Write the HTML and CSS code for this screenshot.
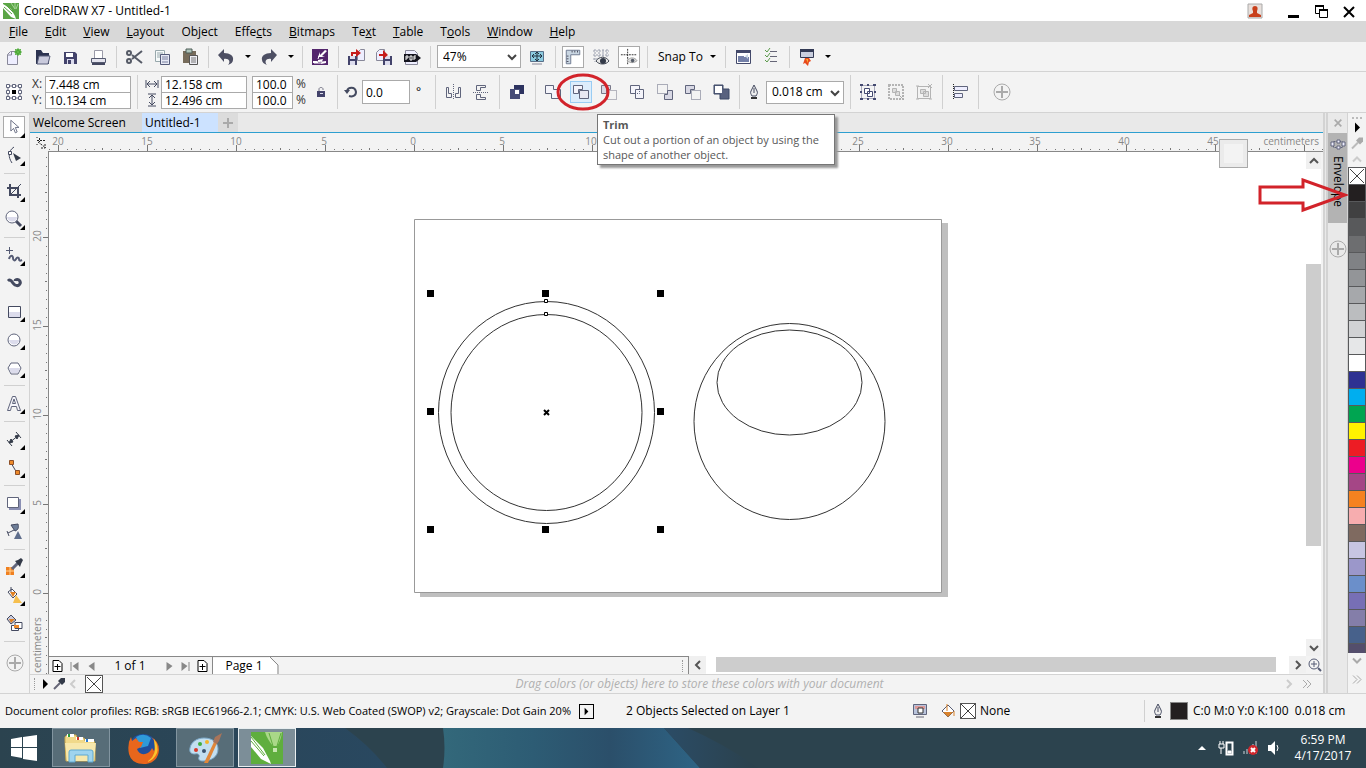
FILE: index.html
```html
<!DOCTYPE html>
<html lang="en">
<head>
  <meta charset="UTF-8">
  <meta name="viewport" content="width=device-width, initial-scale=1.0">
  <title>CorelDRAW X7 - Untitled-1</title>
  <link rel="stylesheet" href="styles.css">
</head>
<body>
  <header class="titlebar">
    <svg class="logo" viewBox="0 0 16 16"><path d="M0 0h16v16H0z" fill="#5aa545"/><path d="M0 1l8 5 4 7 1 3-5-2-8-9z" fill="#fff"/><path d="M1 4l8 7M3 2l7 7" stroke="#5aa545"/><path d="M8 0l4 6M12 0v6M15 1l-2 5" stroke="#a8d59a"/></svg>
    <h1>CorelDRAW X7 - Untitled-1</h1>
    <div class="window-buttons">
      <button class="user" aria-label="Account"><svg viewBox="0 0 16 16"><path d="M1 1h14v14H1z" fill="#e8e0dc" stroke="#aaa"/><path d="M8 3c3 0 3 3 2 5v2l4 2v2H2v-2l4-2V8C5 6 5 3 8 3z" fill="#c8401c"/></svg></button>
      <button aria-label="Minimize"><svg viewBox="0 0 16 16"><path d="M3 12h11v3H3z"/></svg></button>
      <button aria-label="Restore"><svg viewBox="0 0 16 16" fill="#fff" stroke="#000"><path d="M2.500 3.500h8v7h-8z"/><path d="M2 3h9" stroke-width="2"/><path d="M6.500 7.500h8v7h-8z"/><path d="M6 7h9" stroke-width="2"/></svg></button>
      <button aria-label="Close"><svg viewBox="0 0 16 16"><path d="M3 4l10 10M13 4L3 14" stroke="#000" stroke-width="2"/></svg></button>
    </div>
  </header>

  <nav class="menubar">
    <a href="#"><u>F</u>ile</a>
    <a href="#"><u>E</u>dit</a>
    <a href="#"><u>V</u>iew</a>
    <a href="#"><u>L</u>ayout</a>
    <a href="#">Ob<u>j</u>ect</a>
    <a href="#">Effe<u>c</u>ts</a>
    <a href="#"><u>B</u>itmaps</a>
    <a href="#">Te<u>x</u>t</a>
    <a href="#"><u>T</u>able</a>
    <a href="#">T<u>o</u>ols</a>
    <a href="#"><u>W</u>indow</a>
    <a href="#"><u>H</u>elp</a>
  </nav>

  <!-- standard toolbar -->
  <div class="toolbar">
    <button class="tool" aria-label="New"><svg viewBox="0 0 20 20"><path d="M3.500 17.500v-10l3-3h7v13z" fill="#eef" stroke="#889"/><path d="M3.500 8h4V4.500" fill="none" stroke="#889"/><circle cx="14" cy="5" r="3" fill="#3c9a28"/><path d="M14 1v8M10 5h8M11 2l6 6M17 2l-6 6" stroke="#5fb84a"/></svg></button>
    <button class="tool" aria-label="Open"><svg viewBox="0 0 20 20"><path d="M4 17V3h5l2 3h6v11z" fill="#2c3350"/><path d="M5 17l2-8h11l-2 8z" fill="#c9cadc" stroke="#565c78"/></svg></button>
    <button class="tool" aria-label="Save"><svg viewBox="0 0 20 20"><path d="M4 5h11l2 2v10H4z" fill="#43436b"/><path d="M6 6h7v4H6z" fill="#fff"/><path d="M7 12h7v5H7z" fill="#dde"/><path d="M8 13h3v4H8z" fill="#43436b"/></svg></button>
    <button class="tool" aria-label="Print"><svg viewBox="0 0 20 20"><path d="M6.500 11V3.500h8V11" fill="#fff" stroke="#9a9aa8"/><path d="M3.500 11.500h14v4h-14z" fill="#e4e4ee" stroke="#555a70"/><path d="M4 16h13v2H4z" fill="#444860"/></svg></button>
    <i class="sep"></i>
    <button class="tool" aria-label="Cut"><svg viewBox="0 0 20 20" fill="none" stroke="#555a66" stroke-width="2"><path d="M8 8l10 8M8 12l10-8"/><circle cx="5" cy="6" r="2"/><circle cx="5" cy="14" r="2"/></svg></button>
    <button class="tool" aria-label="Copy"><svg viewBox="0 0 20 20"><path d="M3.500 3.500h9v11h-9z" fill="#f6fafa" stroke="#98a8ac"/><path d="M5 6h6M5 8h6M5 10h6" stroke="#98a8ac"/><path d="M8.500 7.500h9v10h-9z" fill="#e6e9f4" stroke="#545a78"/><path d="M10 10h6M10 12h6M10 15h6" stroke="#7a80a0"/></svg></button>
    <button class="tool" aria-label="Paste"><svg viewBox="0 0 20 20"><path d="M3 4h13v12H3z" fill="#776c5b"/><path d="M6 2h6v4H6z" fill="#afc4ba" stroke="#4c5d57"/><path d="M9.500 8.500h8v9h-8z" fill="#eeeef4" stroke="#555"/><path d="M11 11h5M11 13h5M11 15h5" stroke="#777"/></svg></button>
    <i class="sep"></i>
    <button class="tool" aria-label="Undo"><svg viewBox="0 0 20 20"><path d="M2 8l6-6v4c6 0 10 3 9 7 0 2-2 4-5 5 3-3 1-7-4-6v3z" fill="#4d4f63"/></svg></button>
    <button class="drop" aria-label="Undo list"></button>
    <button class="tool" aria-label="Redo"><svg viewBox="0 0 20 20"><path d="M18 8l-6-6v4C6 6 2 9 3 13c0 2 2 4 5 5-3-3-1-7 4-6v3z" fill="#4d4f63"/></svg></button>
    <button class="drop" aria-label="Redo list"></button>
    <i class="sep"></i>
    <button class="tool" aria-label="Search content"><svg viewBox="0 0 20 20"><path d="M2 2h16v16H2z" fill="#53256c"/><path d="M15 3l-5 5V5L8 10h7l-3-1 5-5zM3 16h5v-3l5-1-2 5 5-1v-2l-7 1-2-1H3z" fill="#fff"/><path d="M4 16h8M9 9l-1 3" stroke="#fff"/></svg></button>
    <i class="sep"></i>
    <button class="tool" aria-label="Import"><svg viewBox="0 0 20 20"><path d="M11.500 13.500v-8l3-3h4v11z" fill="#eef" stroke="#889"/><path d="M2 9h9v9H2z" fill="#43436b"/><path d="M4 9h5v3H4zM4 14h5v4H4z" fill="#dde"/><path d="M5 5h5V2l5 4-5 4V7H7v2H5z" fill="#c61c1c"/></svg></button>
    <button class="tool" aria-label="Export"><svg viewBox="0 0 20 20"><path d="M2.500 13.500v-8l3-3h5v11z" fill="#eef" stroke="#889"/><path d="M9 9h9v9H9z" fill="#43436b"/><path d="M11 9h5v3h-5zM11 14h5v4h-5z" fill="#dde"/><path d="M5 7h4V3l5 5-5 4V9H5z" fill="#c61c1c"/></svg></button>
    <button class="tool" aria-label="Publish to PDF"><svg viewBox="0 0 20 20"><path d="M3.500 17.500v-14h9l3 3v11z" fill="#eef" stroke="#889"/><path d="M2 7h12l5 4-5 4H2z" fill="#15151f"/><path d="M4 13V9h2v2H4M8 9v4h2V9zM12 13V9h2M12 11h2" stroke="#fff" fill="none"/></svg></button>
    <i class="sep"></i>
    <span class="select zoom-level">
      <select aria-label="Zoom level"><option>47%</option></select>
      <svg viewBox="0 0 10 10"><path d="M1 3l4 4 4-4" fill="none" stroke="#444" stroke-width="2"/></svg>
    </span>
    <button class="tool" aria-label="Full-screen preview"><svg viewBox="0 0 20 20"><path d="M3.500 4.500h13v10h-13z" fill="#8ccbe0" stroke="#59708a"/><path d="M5 17h10" stroke="#889"/><path d="M10 5v9M5 9h10M8 7l2-2 2 2M8 12l2 2 2-2M7 7L5 9l2 2M13 7l2 2-2 2" stroke="#20303f" fill="none"/></svg></button>
    <i class="sep"></i>
    <button class="tool framed" aria-label="Show rulers"><svg viewBox="0 0 20 20"><path d="M2.500 2.500h15v5h-10v10h-5z" fill="#c9d6e2" stroke="#66738a"/><path d="M9 3v2M12 3v2M15 3v2M3 9h2M3 12h2M3 15h2" stroke="#445"/></svg></button>
    <button class="tool" aria-label="Show grid"><svg viewBox="0 0 20 20"><path d="M4 2v13M8 2v13M12 2v8M16 2v8M2 4h16M2 8h16M2 12h8" stroke="#9a9fae" stroke-dasharray="2 1"/><path d="M5 14c3-5 10-5 13 0-3 4-10 4-13 0z" fill="#e8e8e8" stroke="#444a55"/><circle cx="12" cy="14" r="3" fill="#333a48"/></svg></button>
    <button class="tool framed" aria-label="Show guidelines"><svg viewBox="0 0 20 20"><path d="M8.500 1v18M1 7.500h18" stroke="#222" stroke-dasharray="2 1"/><path d="M8 14c3-4 8-4 11 0-3 3-8 3-11 0z" fill="#ddd" stroke="#999"/><circle cx="14" cy="14" r="2" fill="#555c68"/></svg></button>
    <i class="sep"></i>
    <button class="snap">Snap To</button>
    <button class="drop" aria-label="Snap options"></button>
    <i class="sep"></i>
    <button class="tool" aria-label="Welcome screen"><svg viewBox="0 0 20 20"><path d="M3.500 3.500h14v13h-14z" fill="#fff" stroke="#43496a"/><path d="M3 3h15v3H3z" fill="#43496a"/><path d="M5 9h6v6H5zM10 10h6v5h-6z" fill="#7480a8"/><path d="M12 9l3-2v5" fill="#c9d6e2"/></svg></button>
    <button class="tool" aria-label="Options"><svg viewBox="0 0 20 20" fill="none"><path d="M9 4.500h7M9 9.500h7M9 14.500h7" stroke="#667"/><path d="M4 3l2 2 3-4M4 8l2 2 3-4M4 13l2 2 3-4" stroke="#5a9a4a"/></svg></button>
    <i class="sep"></i>
    <button class="tool" aria-label="Application launcher"><svg viewBox="0 0 20 20"><path d="M3.500 2.500h13v8h-13z" fill="#c9cede" stroke="#333a55"/><path d="M3 2h14v3H3z" fill="#333a55"/><path d="M8 11h4l2 3-2 1-1 4-3-3-2 1z" fill="#e8491c"/><path d="M9 12h2v4z" fill="#f8b030"/></svg></button>
    <button class="drop" aria-label="Launcher list"></button>
  </div>

  <!-- property bar -->
  <div class="toolbar propbar">
    <button class="tool" aria-label="Object origin"><svg viewBox="0 0 20 20" fill="#fff" stroke="#60657c"><path d="M4 4h12v12H4z"/><path d="M2.500 2.500h3v3h-3zM8.500 2.500h3v3h-3zM14.500 2.500h3v3h-3zM2.500 8.500h3v3h-3zM14.500 8.500h3v3h-3zM2.500 14.500h3v3h-3zM8.500 14.500h3v3h-3zM14.500 14.500h3v3h-3z"/><path d="M8 8h4v4H8z" fill="#000" stroke="none"/></svg></button>
    <div class="pair">
      <label for="pos-x">X:</label><input id="pos-x" value="7.448 cm">
      <label for="pos-y">Y:</label><input id="pos-y" value="10.134 cm">
    </div>
    <i class="sep"></i>
    <div class="pair size">
      <label for="width" aria-label="Width"><svg viewBox="0 0 14 14"><path d="M1 3v8M13 3v8M2 7h10M5 4L2 7l3 3M9 4l3 3-3 3" fill="none" stroke="#444a60"/></svg></label><input id="width" value="12.158 cm">
      <label for="height" aria-label="Height"><svg viewBox="0 0 14 14"><path d="M3 1h8M3 13h8M7 2v10M4 5l3-3 3 3M4 9l3 3 3-3" fill="none" stroke="#444a60"/></svg></label><input id="height" value="12.496 cm">
    </div>
    <div class="pair scale">
      <input id="scale-x" value="100.0"><label for="scale-x">%</label>
      <input id="scale-y" value="100.0"><label for="scale-y">%</label>
    </div>
    <button class="tool lock" aria-label="Lock ratio"><svg viewBox="0 0 20 20"><path d="M6 9h8v6H6z" fill="#43436b"/><path d="M8 9V7c0-2 4-2 4 0v1" fill="none" stroke="#778"/><path d="M9 11h3v1H9z" fill="#dde"/></svg></button>
    <i class="sep"></i>
    <label class="rotate" for="angle" aria-label="Angle of rotation"><svg viewBox="0 0 14 14"><path d="M3 6c1-4 8-5 9 1 0 4-4 5-7 4" fill="none" stroke="#444a60" stroke-width="2"/><path d="M0 5h6L3 9z" fill="#444a60"/></svg></label>
    <input id="angle" class="angle" value="0.0">
    <span class="degree">°</span>
    <i class="sep"></i>
    <button class="tool" aria-label="Mirror horizontally"><svg viewBox="0 0 20 20" fill="none" stroke="#60657c"><path d="M10.500 2v16" stroke-dasharray="1 1"/><path d="M3.500 5.500h2v6h3v4h-5zM17.500 5.500h-2v6h-3v4h5z"/></svg></button>
    <button class="tool" aria-label="Mirror vertically"><svg viewBox="0 0 20 20" fill="none" stroke="#60657c"><path d="M2 10.500h16" stroke-dasharray="1 1"/><path d="M5.500 3.500h9v2h-5v3h-4zM5.500 17.500h9v-2h-5v-3h-4z"/></svg></button>
    <i class="sep"></i>
    <button class="tool" aria-label="Combine"><svg viewBox="0 0 20 20"><path d="M7 3h10v9H7z" fill="#2d3360"/><path d="M3 7h10v10H3z" fill="#474d78"/><path d="M8 8h4v4H8z" fill="#fff"/></svg></button>
    <i class="sep"></i>
    <button class="tool" aria-label="Weld"><svg viewBox="0 0 20 20"><path d="M2.500 3.500h8v4h7v9h-9v-5h-6z" fill="#f4f4fa" stroke="#60657c"/></svg></button>
    <div class="trim">
      <button class="tool hot" aria-label="Trim"><svg viewBox="0 0 20 20" fill="#f4f4fa" stroke="#60657c"><path d="M2.500 3.500h9v4h-4v4h-5z"/><path d="M8.500 8.500h9v8h-9z" fill="#e8e8f2"/></svg></button>
      <svg class="mark" viewBox="0 0 54 38"><ellipse cx="27" cy="19" rx="25" ry="17" fill="none" stroke="#d2232a" stroke-width="3"/></svg>
      <div class="tooltip" role="tooltip"><strong>Trim</strong><p>Cut out a portion of an object by using the shape of another object.</p></div>
    </div>
    <button class="tool" aria-label="Intersect"><svg viewBox="0 0 20 20" fill="none" stroke="#778"><path d="M2.500 3.500h9v4h-4v4h-5z" fill="#d8d8e4"/><path d="M8.500 8.500h9v9h-9z" stroke-dasharray="1 1"/></svg></button>
    <button class="tool" aria-label="Simplify"><svg viewBox="0 0 20 20" fill="#f4f4fa" stroke="#60657c"><path d="M3.500 3.500h9v8h-9z"/><path d="M8.500 7.500h8v9h-8z"/><path d="M8 11.500h4.500V7" fill="none" stroke-dasharray="1 1"/></svg></button>
    <button class="tool" aria-label="Front minus back"><svg viewBox="0 0 20 20" stroke="#60657c"><path d="M2.500 2.500h10v9h-10z" fill="none" stroke-dasharray="1 1"/><path d="M12.500 8.500h5v9h-8v-5h3z" fill="#d8d8e4"/></svg></button>
    <button class="tool" aria-label="Back minus front"><svg viewBox="0 0 20 20" stroke="#60657c"><path d="M2.500 3.500h9v4h-4v4h-5z" fill="#d8d8e4"/><path d="M8.500 8.500h9v9h-9z" fill="none" stroke-dasharray="1 1"/></svg></button>
    <button class="tool" aria-label="Boundary"><svg viewBox="0 0 20 20"><path d="M3 3h9v4h6v10H9v-5H3z" fill="#59627f" stroke="#3d4866"/><path d="M4 4h7v7H4z" fill="#fff"/></svg></button>
    <i class="sep"></i>
    <span class="pen"><svg viewBox="0 0 14 16"><path d="M7 1L4 7c-1 2 0 3 1 5h4c1-2 2-3 1-5zM7 4v5" fill="#eee" stroke="#444a60"/><path d="M4 13h6v2H4z" fill="#333"/></svg></span>
    <span class="select outline-width">
      <select aria-label="Outline width"><option>0.018 cm</option></select>
      <svg viewBox="0 0 10 10"><path d="M1 3l4 4 4-4" fill="none" stroke="#444" stroke-width="2"/></svg>
    </span>
    <i class="sep"></i>
    <button class="tool" aria-label="Group"><svg viewBox="0 0 20 20" fill="none" stroke="#444a70"><path d="M3.500 3.500h13v13h-13z" stroke="#aab"/><path d="M6.500 6.500h5v5h-5zM9.500 9.500h5v5h-5z" fill="#fff"/><path d="M2 3h3M9 3h2M15 3h3M2 17h3M9 17h2M15 17h3M3 9v2M17 9v2" stroke-width="2"/></svg></button>
    <button class="tool" aria-label="Ungroup" disabled><svg viewBox="0 0 20 20" fill="#ddd" stroke="#b4b4b4"><path d="M3 3h14v14H3z" fill="none" stroke-width="2" stroke-dasharray="2 1"/><path d="M6.500 6.500h4v4h-4zM9.500 9.500h4v4h-4z"/><path d="M13 13l5 5M18 13l-5 5" stroke="#aaa"/></svg></button>
    <button class="tool" aria-label="Ungroup all" disabled><svg viewBox="0 0 20 20" fill="#ddd" stroke="#b4b4b4"><path d="M3.500 4.500h13v12h-13z" fill="none"/><path d="M6.500 7.500h5v4h-5zM9.500 9.500h5v5h-5z"/><path d="M2 4h3M2 17h3M15 17h3M14 2l4 4M18 2l-4 4"/></svg></button>
    <i class="sep"></i>
    <button class="tool" aria-label="Align and distribute"><svg viewBox="0 0 20 20" stroke="#60657c"><path d="M3.500 2v16" stroke="#222" stroke-dasharray="1 1"/><path d="M4.500 4.500h13v4h-13zM4.500 11.500h8v4h-8z" fill="#eef"/></svg></button>
    <i class="sep"></i>
    <button class="add" aria-label="Quick customize"><svg viewBox="0 0 20 20"><circle cx="10" cy="10" r="8" fill="none" stroke="#aaa"/><path d="M10 4v12M4 10h12" stroke="#aaa" stroke-width="2"/></svg></button>
  </div>

  <main>
    <aside class="toolbox">
      <button class="tool framed more" aria-label="Pick"><svg viewBox="0 0 20 20"><path d="M6.500 2.500v12l3-3 2 5 2-1-2-5h4z" fill="#fff" stroke="#60657c"/></svg></button>
      <button class="tool more" aria-label="Shape"><svg viewBox="0 0 20 20"><path d="M10 2C4 6 4 12 8 18" fill="none" stroke="#444a60"/><path d="M4.500 6.500h3v3h-3z" fill="#fff" stroke="#444a60"/><path d="M9 8l8 5-5 3z" fill="#333a48"/></svg></button>
      <i class="rule"></i>
      <button class="tool more" aria-label="Crop"><svg viewBox="0 0 20 20" fill="none" stroke="#444a60" stroke-width="2"><path d="M6 3v11h11M3 7h11v10"/><path d="M6 14L17 3" stroke-width="1"/></svg></button>
      <button class="tool more" aria-label="Zoom"><svg viewBox="0 0 20 20"><path d="M12 12l5 5" stroke="#444a60" stroke-width="3"/><circle cx="8" cy="8" r="6" fill="#fff" stroke="#60657c"/><path d="M3 8h10c0 6-9 6-10 0z" fill="#dcdcec"/></svg></button>
      <i class="rule"></i>
      <button class="tool more" aria-label="Freehand"><svg viewBox="0 0 20 20" fill="none" stroke="#555b74"><path d="M5.500 2v7M2 5.500h7"/><path d="M5 14c1-4 4-4 4-1s2 3 3 1 3-2 3 0 1 2 3 1" stroke-width="2"/></svg></button>
      <button class="tool" aria-label="Artistic media"><svg viewBox="0 0 20 20" fill="none" stroke="#444a60"><path d="M4 8c3-3 4 2 7 4 4 2 7-2 4-5-2-1-4 0-4 1" stroke-width="3"/></svg></button>
      <button class="tool more" aria-label="Rectangle"><svg viewBox="0 0 20 20"><path d="M4.500 5.500h12v11h-12z" fill="#fff" stroke="#444a60"/><path d="M5 11h11v5H5z" fill="#dcdcec"/></svg></button>
      <button class="tool more" aria-label="Ellipse"><svg viewBox="0 0 20 20"><circle cx="10" cy="11" r="6" fill="#fff" stroke="#60657c"/><path d="M5 11h10c0 6-9 6-10 0z" fill="#dcdcec"/></svg></button>
      <button class="tool more" aria-label="Polygon"><svg viewBox="0 0 20 20"><path d="M7 6h7l3 5-3 6H7l-3-6z" fill="#fff" stroke="#60657c"/><path d="M5 11h11l-2 5H7z" fill="#dcdcec"/></svg></button>
      <i class="rule"></i>
      <button class="tool more" aria-label="Text"><svg viewBox="0 0 20 20"><path d="M3.500 17.500l5-14h3l5 14h-3l-1-4h-5l-1 4zM8.500 10.500h3L10 6z" fill="#f4f4fa" stroke="#60657c"/></svg></button>
      <i class="rule"></i>
      <button class="tool more" aria-label="Dimension"><svg viewBox="0 0 20 20" stroke="#333a48"><path d="M5 14L15 6M3 11l5 6M12 3l5 6"/><path d="M5 14l2-4 2 3zM15 6l-2 4-2-3z" fill="#333a48"/></svg></button>
      <button class="tool more" aria-label="Connector"><svg viewBox="0 0 20 20"><path d="M7 6l6 10" stroke="#444a60"/><path d="M5.500 3.500h4v4h-4zM11.500 13.500h4v4h-4z" fill="#ee8a2a" stroke="#8c4f28"/></svg></button>
      <i class="rule"></i>
      <button class="tool more" aria-label="Drop shadow"><svg viewBox="0 0 20 20"><path d="M5 6h12v11H5z" fill="#8b90b4"/><path d="M3.500 4.500h11v10h-11z" fill="#fff" stroke="#60657c"/></svg></button>
      <button class="tool" aria-label="Transparency"><svg viewBox="0 0 20 20"><path d="M7 4l7-1c1 4 0 6-3 7z" fill="#6e7e98" stroke="#444a60"/><path d="M10 9l-6 3M3 10l2 5" stroke="#444a60"/><path d="M14 10l4 8h-8z" fill="#5f6e8c"/></svg></button>
      <i class="rule"></i>
      <button class="tool more" aria-label="Color eyedropper"><svg viewBox="0 0 20 20"><path d="M2 10h8v8H2z" fill="#f08020"/><path d="M6 10v8M2 14h8" stroke="#ffd090"/><path d="M8 12l6-6" stroke="#60657c" stroke-width="3"/><path d="M11 4l3-1 3-2 2 2-2 4-1 3z" fill="#333a48"/></svg></button>
      <button class="tool more" aria-label="Interactive fill"><svg viewBox="0 0 20 20"><path d="M4 7l4-3 5 5-4 4z" fill="#fff" stroke="#444a60"/><path d="M6 7h6l-3 5z" fill="#e08020"/><path d="M7 2v5" stroke="#444a60"/><path d="M12 10l6 8H9z" fill="#f6bf4e"/></svg></button>
      <button class="tool" aria-label="Smart fill"><svg viewBox="0 0 20 20"><path d="M3 6l4-4 5 5-5 4z" fill="#c9cadc" stroke="#444a60"/><path d="M5 6h6l-4 4z" fill="#e08020"/><path d="M11 9.500h7v6h-7zM7.500 12.500h7v5h-7z" fill="#fff" stroke="#444a60"/><path d="M10 12h5v3h-5z" fill="#ee8a2a"/></svg></button>
      <i class="rule"></i>
      <button class="add" aria-label="Quick customize"><svg viewBox="0 0 20 20"><circle cx="10" cy="10" r="8" fill="none" stroke="#aaa"/><path d="M10 4v12M4 10h12" stroke="#aaa" stroke-width="2"/></svg></button>
    </aside>

    <section class="document">
      <div class="tabs">
        <button class="tab">Welcome Screen</button>
        <button class="tab active">Untitled-1</button>
        <button class="tab-add" aria-label="New tab"><svg viewBox="0 0 12 12"><path d="M6 1v10M1 6h10" stroke="#aaa" stroke-width="2"/></svg></button>
      </div>

      <div class="ruler-row">
        <svg class="ruler-corner" viewBox="0 0 18 18"><path d="M9.500 5v4M7 7.500h9M8 9l8 6M15 11v4h-4M7 4v1M7 11v1" fill="none" stroke="#222" stroke-dasharray="2 1"/></svg>
        <svg class="ruler-top">
          <defs>
            <pattern id="ticks-x" x="10" width="89" height="18" patternUnits="userSpaceOnUse">
              <path d="M0 12h1v6H0zM9 16h1v1H9zM18 16h1v1h-1zM27 16h1v1h-1zM36 16h1v1h-1zM44 15h1v2h-1zM53 16h1v1h-1zM62 16h1v1h-1zM71 16h1v1h-1zM80 16h1v1h-1z" fill="#777"/>
            </pattern>
          </defs>
          <rect width="100%" height="18" fill="url(#ticks-x)"/>
          <g text-anchor="middle">
            <text x="10" y="12">20</text><text x="99" y="12">15</text><text x="188" y="12">10</text><text x="276" y="12">5</text><text x="365" y="12">0</text><text x="454" y="12">5</text><text x="543" y="12">10</text><text x="810" y="12">25</text><text x="899" y="12">30</text><text x="987" y="12">35</text><text x="1076" y="12">40</text><text x="1165" y="12">45</text>
          </g>
          <text x="100%" dx="-4" y="12" text-anchor="end">centimeters</text>
        </svg>
      </div>

      <div class="work">
        <svg class="ruler-left">
          <defs>
            <pattern id="ticks-y" y="85" width="18" height="89" patternUnits="userSpaceOnUse">
              <path d="M13 0h5v1h-5zM16 9h1v1h-1zM16 18h1v1h-1zM16 27h1v1h-1zM16 36h1v1h-1zM15 44h2v1h-2zM16 53h1v1h-1zM16 62h1v1h-1zM16 71h1v1h-1zM16 80h1v1h-1z" fill="#777"/>
            </pattern>
          </defs>
          <rect width="18" height="100%" fill="url(#ticks-y)"/>
          <g text-anchor="middle">
            <text transform="translate(11 84) rotate(-90)">20</text>
            <text transform="translate(11 173) rotate(-90)">15</text>
            <text transform="translate(11 262) rotate(-90)">10</text>
            <text transform="translate(11 351) rotate(-90)">5</text>
            <text transform="translate(11 440) rotate(-90)">0</text>
            <text transform="translate(11 493) rotate(-90)">centimeters</text>
          </g>
        </svg>
        <div class="stage">
          <div class="view">
            <svg class="canvas">
              <g transform="translate(365 67)">
                <path d="M6 4h528v374H6z" fill="#bfbfbf"/>
                <path d="M.5.5h527v373H.5z" fill="#fff" stroke="#999"/>
                <g fill="none" stroke="#333">
                  <ellipse cx="132.500" cy="193.500" rx="108" ry="111"/>
                  <ellipse cx="132.500" cy="193.500" rx="95.500" ry="98"/>
                  <ellipse cx="375.500" cy="202.500" rx="95.500" ry="98"/>
                  <ellipse cx="375.500" cy="163.500" rx="72.500" ry="52.500"/>
                </g>
                <path d="M13 71h7v7h-7zM128 71h7v7h-7zM243 71h7v7h-7zM13 189h7v7h-7zM243 189h7v7h-7zM13 307h7v7h-7zM128 307h7v7h-7zM243 307h7v7h-7z"/>
                <path d="M130.500 80.500h3v3h-3zM130.500 93.500h3v3h-3z" fill="#fff" stroke="#000"/>
                <path d="M130 191l5 5M135 191l-5 5" stroke="#000" stroke-width="2"/>
              </g>
            </svg>
            <div class="scroll-y">
              <button aria-label="Scroll up"><svg viewBox="0 0 10 10"><path d="M1 7l4-4 4 4" fill="none" stroke="#555" stroke-width="2"/></svg></button>
              <div class="track"><span class="thumb"></span></div>
              <button aria-label="Scroll down"><svg viewBox="0 0 10 10"><path d="M1 3l4 4 4-4" fill="none" stroke="#555" stroke-width="2"/></svg></button>
            </div>
          </div>
          <div class="bottom">
            <div class="pages">
              <button aria-label="Add page before"><svg viewBox="0 0 14 14"><path d="M2.500 1.500h6l3 3v8h-9zM4 7.500h6M7 5v6" fill="#fff" stroke="#000"/></svg></button>
              <button aria-label="First page"><svg viewBox="0 0 14 14" fill="#888"><path d="M3 3h1v9H3zM11 3v9L5 7z"/></svg></button>
              <button aria-label="Previous page"><svg viewBox="0 0 14 14" fill="#888"><path d="M10 3v9L4 7z"/></svg></button>
              <span class="page-count">1 of 1</span>
              <button aria-label="Next page"><svg viewBox="0 0 14 14" fill="#888"><path d="M5 3v9l6-5z"/></svg></button>
              <button aria-label="Last page"><svg viewBox="0 0 14 14" fill="#888"><path d="M3 3v9l6-5zM10 3h1v9h-1z"/></svg></button>
              <button aria-label="Add page after"><svg viewBox="0 0 14 14"><path d="M2.500 1.500h6l3 3v8h-9zM4 7.500h6M7 5v6" fill="#fff" stroke="#000"/></svg></button>
              <button class="page-tab"><span>Page 1</span><svg viewBox="0 0 10 17"><path d="M0 0l8 8v9H0z" fill="#fff"/><path d="M1 0l8 8v9" fill="none" stroke="#888"/></svg></button>
              <i class="grip"></i>
            </div>
            <div class="scroll-x">
              <button aria-label="Scroll left"><svg viewBox="0 0 10 10"><path d="M7 1L3 5l4 4" fill="none" stroke="#555" stroke-width="2"/></svg></button>
              <div class="track"><span class="thumb"></span></div>
              <button aria-label="Scroll right"><svg viewBox="0 0 10 10"><path d="M3 1l4 4-4 4" fill="none" stroke="#555" stroke-width="2"/></svg></button>
            </div>
            <button class="navigator" aria-label="Navigator"><svg viewBox="0 0 14 14" fill="none" stroke="#555b74"><circle cx="6" cy="6" r="5"/><path d="M6 3v6M3 6h6"/><path d="M10 10l3 3" stroke-width="2"/></svg></button>
          </div>
        </div>
      </div>

      <div class="doc-palette">
        <i class="grip"></i>
        <button aria-label="Palette menu"><svg viewBox="0 0 12 14"><path d="M4 2v10l5-5z"/></svg></button>
        <button aria-label="Eyedropper"><svg viewBox="0 0 14 14"><path d="M2 12l6-6" stroke="#667" stroke-width="2"/><path d="M6 4l4 4 3-3V1H9z" fill="#333a48"/></svg></button>
        <button aria-label="Back"><svg viewBox="0 0 12 14"><path d="M8 3L4 7l4 4" fill="none" stroke="#ccc" stroke-width="2"/></svg></button>
        <button class="no-color" aria-label="No color"><svg viewBox="0 0 16 16"><path d="M1 1l14 14M15 1L1 15" stroke="#444"/></svg></button>
        <em>Drag colors (or objects) here to store these colors with your document</em>
        <button class="next" aria-label="Forward"><svg viewBox="0 0 12 14"><path d="M4 3l4 4-4 4" fill="none" stroke="#ccc" stroke-width="2"/></svg></button>
        <button aria-label="Expand"><svg viewBox="0 0 12 14"><path d="M2 3l4 4-4 4M6 3l4 4-4 4" fill="none" stroke="#aaa"/></svg></button>
      </div>
      <span class="drop-zone"></span>
    </section>

    <aside class="docker">
      <button class="docker-close" aria-label="Close docker"><svg viewBox="0 0 12 12"><path d="M2 2l8 8M10 2l-8 8" stroke="#aaa" stroke-width="2"/></svg></button>
      <button class="docker-tab">
        <svg viewBox="0 0 16 14"><path d="M3.500 4.500h9v6h-9z" fill="none" stroke="#60657c" stroke-dasharray="2 1"/><path d="M1 5h3v4H1zM7 3h3v3H7zM12 5h3v4h-3zM7 9h3v3H7z" fill="#eef" stroke="#60657c"/></svg>
        <span>Envelope</span>
      </button>
      <button class="add" aria-label="Quick customize"><svg viewBox="0 0 20 20"><circle cx="10" cy="10" r="8" fill="none" stroke="#aaa"/><path d="M10 4v12M4 10h12" stroke="#aaa" stroke-width="2"/></svg></button>
    </aside>

    <aside class="palette">
      <div class="palette-head">
        <i class="grip wide"></i>
        <button aria-label="Palette menu"><svg viewBox="0 0 14 14"><path d="M5 2v10l5-5z"/></svg></button>
        <button aria-label="Eyedropper"><svg viewBox="0 0 14 14"><path d="M2 12l6-6" stroke="#bbb" stroke-width="2"/><path d="M6 4l4 4 3-3V1H9z" fill="#aaa"/></svg></button>
        <button aria-label="Scroll up"><svg viewBox="0 0 14 14"><path d="M3 9l4-4 4 4" fill="none" stroke="#ccc" stroke-width="2"/></svg></button>
      </div>
      <div class="swatches">
        <button class="none" aria-label="No color"><svg viewBox="0 0 16 16"><path d="M1 1l14 14M15 1L1 15" stroke="#444"/></svg></button>
        <button style="background:#231f20" aria-label="Black"></button>
        <button style="background:#404041" aria-label="90% black"></button>
        <button style="background:#58595b" aria-label="80% black"></button>
        <button style="background:#6d6e70" aria-label="70% black"></button>
        <button style="background:#808285" aria-label="60% black"></button>
        <button style="background:#939598" aria-label="50% black"></button>
        <button style="background:#a6a8ab" aria-label="40% black"></button>
        <button style="background:#bbbdbf" aria-label="30% black"></button>
        <button style="background:#d1d2d4" aria-label="20% black"></button>
        <button style="background:#e6e7e8" aria-label="10% black"></button>
        <button style="background:#ffffff" aria-label="White"></button>
        <button style="background:#2e3192" aria-label="Blue"></button>
        <button style="background:#00aeef" aria-label="Cyan"></button>
        <button style="background:#00a551" aria-label="Green"></button>
        <button style="background:#fff200" aria-label="Yellow"></button>
        <button style="background:#ed1c24" aria-label="Red"></button>
        <button style="background:#ec008c" aria-label="Magenta"></button>
        <button style="background:#a54686" aria-label="Purple"></button>
        <button style="background:#f58220" aria-label="Orange"></button>
        <button style="background:#f7adaf" aria-label="Pink"></button>
        <button style="background:#7f6a60" aria-label="Brown"></button>
        <button style="background:#c7c5e2" aria-label="Powder blue"></button>
        <button style="background:#9b97ca" aria-label="Pastel blue"></button>
        <button style="background:#6b8fca" aria-label="Baby blue"></button>
        <button style="background:#776fb5" aria-label="Electric blue"></button>
        <button style="background:#847ea9" aria-label="Twilight blue"></button>
        <button style="background:#47618b" aria-label="Navy blue"></button>
        <button style="background:#544e6c" aria-label="Deep navy"></button>
      </div>
      <div class="palette-foot">
        <button aria-label="Scroll down"><svg viewBox="0 0 14 14"><path d="M3 5l4 4 4-4" fill="none" stroke="#aaa" stroke-width="2"/></svg></button>
        <button aria-label="Expand"><svg viewBox="0 0 14 14"><path d="M3 3l4 4-4 4M7 3l4 4-4 4" fill="none" stroke="#aaa"/></svg></button>
      </div>
    </aside>

    <svg class="arrow" viewBox="0 0 90 36"><path d="M2 9h43V2l42 15-42 15v-7H2z" fill="none" stroke="#d2232a" stroke-width="3"/></svg>
  </main>

  <footer class="status">
    <div class="profiles">
      <span>Document color profiles: RGB: sRGB IEC61966-2.1; CMYK: U.S. Web Coated (SWOP) v2; Grayscale: Dot Gain 20%</span>
      <button aria-label="More"><svg viewBox="0 0 14 14"><path d="M5 3v8l4-4z"/></svg></button>
    </div>
    <span>2 Objects Selected on Layer 1</span>
    <div class="fill">
      <svg viewBox="0 0 16 16"><path d="M1.500 1.500h13v10h-13z" fill="#b9c4dc" stroke="#60657c"/><path d="M3 3h10v3H3z" fill="#d99"/><path d="M6 5h5v5H6z" fill="#fff" stroke="#333"/><path d="M4 14h8" stroke="#667"/></svg>
      <svg viewBox="0 0 16 16"><path d="M2 8l6-6 6 6-6 6z" fill="#fff" stroke="#555b74"/><path d="M3 9h10l-5 5z" fill="#d9822b"/><path d="M7 1v7M14 8v5" stroke="#d9822b"/></svg>
      <span class="no-color"><svg viewBox="0 0 16 16"><path d="M0 0l16 16M16 0L0 16" stroke="#222"/></svg></span>
      <span>None</span>
    </div>
    <div class="outline">
      <svg viewBox="0 0 14 16"><path d="M7 1L4 7c-1 2 0 3 1 5h4c1-2 2-3 1-5zM7 4v5" fill="#eee" stroke="#444a60"/><path d="M4 13h6v2H4z" fill="#333"/></svg>
      <i class="black"></i>
      <span>C:0 M:0 Y:0 K:100&nbsp; 0.018 cm</span>
    </div>
  </footer>

  <div class="taskbar">
    <svg class="wallpaper" viewBox="0 0 1366 40" preserveAspectRatio="none">
      <defs>
        <linearGradient id="wave"><stop offset="0" stop-color="#33687a"/><stop offset=".35" stop-color="#2d5c74"/><stop offset=".65" stop-color="#2b4f6a"/><stop offset="1" stop-color="#2e6485"/></linearGradient>
        <linearGradient id="tail"><stop offset="0" stop-color="#2b4c66"/><stop offset="1" stop-color="#2b414c"/></linearGradient>
        <linearGradient id="left"><stop offset="0" stop-color="#2b434f"/><stop offset="1" stop-color="#294860"/></linearGradient>
      </defs>
      <path d="M0 0h1366v40H0z" fill="#2c434e"/>
      <path d="M0 0h345q25 18 42 40H0z" fill="url(#left)"/>
      <path d="M443 0h221l36 40H443q3-20 0-40z" fill="url(#wave)"/>
      <path d="M664 0h24q40 18 70 40h-58z" fill="url(#tail)"/>
    </svg>
    <button class="start" aria-label="Start"><svg viewBox="0 0 26 26" fill="#fff"><path d="M0 4l11-2v10H0zM12 2l14-2v12H12zM0 13h11v10L0 21zM12 13h14v13l-14-2z"/></svg></button>
    <button class="app open" aria-label="File Explorer"><svg viewBox="0 0 36 34"><path d="M2 10V6l2-2h9l1 3h7l1 3h9l1 3v17H3z" fill="#f0d98a" stroke="#c9a850"/><path d="M4 3h7v3H4zM13 6h7v3h-7zM22 8h9v3h-9z" fill="#fff"/><path d="M5 3h2v3H5z" fill="#2a9a3a"/><path d="M14 6h2v3h-2z" fill="#d03a2a"/><path d="M23 8h2v3h-2z" fill="#2a7ad0"/><path d="M2 12h31l-2 18H4z" fill="#f7e8ac"/><path d="M6 31V21q0-2 2-2h20q2 0 2 2v10h-5v-7H12v7z" fill="#9fd4ee" stroke="#5fa8d0"/></svg></button>
    <button class="app" aria-label="Firefox"><svg viewBox="0 0 36 34"><circle cx="18" cy="17" r="14" fill="#1f4f9c"/><path d="M11 6q8-5 15 1l-3 8-8 2z" fill="#2f9ad8"/><path d="M6 6l1 4 4-3 3 4h4l-2 5-4 2q2 6 8 5 5-1 7-6l2 3q3-9-3-14 8 4 8 13-1 12-13 14Q7 34 4 23 2 13 6 6z" fill="#e8661c"/><path d="M29 8q5 7 3 14-3 7-10 9 7-5 8-12z" fill="#fbc42c"/></svg></button>
    <button class="app open" aria-label="Paint"><svg viewBox="0 0 36 34"><path d="M17 7c9 0 14 5 14 11 0 8-7 12-15 12-4 0-5-2-4-4s-1-4-4-3c-4 0-6-2-5-6 1-6 7-10 14-10z" fill="#c3dff0" stroke="#7ba8c8"/><circle cx="9" cy="19" r="2" fill="#d83a2a"/><circle cx="13" cy="13" r="2" fill="#3fae3f"/><circle cx="20" cy="11" r="2" fill="#f3b52a"/><circle cx="17" cy="20" r="2" fill="#3b5470"/><path d="M17 32l10-21 3 1-9 20z" fill="#e0873a"/><path d="M26 11l2-5 7-4-3 8-2 3z" fill="#a8745a"/></svg></button>
    <button class="app open current" aria-label="CorelDRAW"><svg viewBox="0 0 36 34"><path d="M2 1h32v32H2z" fill="#5fae3e"/><path d="M2 5l12 12 7 13 1 3-10-5L2 16z" fill="#fff"/><path d="M2 10l13 15M2 6l14 18" stroke="#5fae3e"/><path d="M16 1h17q-1 8-5 14h-4Q18 8 16 1z" fill="#a9d888"/><path d="M20 2l4 13M28 15l4-13" stroke="#5fae3e"/><path d="M24 17h4v4h-4z" fill="#c6e6b0"/></svg></button>
    <div class="tray">
      <svg viewBox="0 0 16 16" fill="#fff"><path d="M4 10l4-4 4 4z"/></svg>
      <svg viewBox="0 0 16 16" fill="none" stroke="#fff"><path d="M1 4h5v4H1zM2 1v3M5 1v3M3 8v6"/><path d="M8.500 2.500h6v12h-6z" stroke-width="2"/><path d="M10 11h3v2h-3z" fill="#fff"/></svg>
      <svg viewBox="0 0 16 16"><path d="M1 11h2v3H1zM4 9h2v5H4zM7 7h2v7H7zM10 4h2v10h-2zM13 1h2v13h-2z" fill="#7d8c94"/><circle cx="11" cy="10" r="5" fill="#d0262c"/><path d="M9 8l4 4M13 8l-4 4" stroke="#fff" stroke-width="2"/></svg>
      <svg viewBox="0 0 16 16"><path d="M2 5h3l4-4v14l-4-4H2z" fill="#fff"/><path d="M11 5q2 3 0 6" fill="none" stroke="#fff"/></svg>
      <div class="clock"><span>6:59 PM</span><span>4/17/2017</span></div>
    </div>
  </div>
</body>
</html>
```
FILE: styles.css
```css
* {
  margin: 0;
  padding: 0;
  box-sizing: border-box;
}

body {
  font-family: "Open Sans", "Noto Sans", sans-serif;
  font-size: 12px;
  line-height: 16px;
  color: #000;
  background-color: #f3f3f3;
  display: flex;
  flex-direction: column;
  height: 100vh;
  overflow: hidden;
}

button, input, select {
  font: inherit;
  color: inherit;
  border: none;
  background: none;
  border-radius: 0;
}

button {
  display: flex;
  align-items: center;
  justify-content: center;
  flex: none;
}

svg {
  display: block;
  flex: none;
}

a {
  color: inherit;
  text-decoration: none;
}

/* title and menu */
.titlebar {
  display: flex;
  align-items: center;
  gap: 5px;
  height: 21px;
  padding: 0 9px 0 3px;
  background-color: #fff;
}

.titlebar h1 {
  font-size: 12px;
  font-weight: normal;
}

.logo {
  width: 16px;
  height: 16px;
}

.window-buttons {
  display: flex;
  gap: 12px;
  margin-left: auto;
}

.window-buttons svg {
  width: 16px;
  height: 16px;
}

.window-buttons .user {
  margin-right: 10px;
}

.menubar {
  display: flex;
  align-items: center;
  gap: 17px;
  height: 21px;
  padding-left: 9px;
  background-color: #d8d8d8;
}

/* toolbars */
.toolbar {
  display: flex;
  align-items: center;
  height: 30px;
  border-bottom: 1px solid #d3d3d3;
}

.propbar {
  height: 41px;
}

.tool {
  width: 28px;
  height: 28px;
}

.tool svg,
.add svg {
  width: 20px;
  height: 20px;
}

.framed svg {
  width: 22px;
  height: 22px;
  padding: 1px;
  border: 1px solid #aaa;
  background-color: #fff;
}

.hot svg {
  width: 22px;
  height: 22px;
  border: 1px solid #99ccf3;
  background-color: #ddedfb;
}

.sep {
  width: 1px;
  height: 22px;
  margin: 0 3px 0 4px;
  background-color: #d0d0d0;
}

.propbar .sep {
  height: 34px;
}

.drop {
  width: 15px;
  height: 22px;
}

.drop::before {
  content: "";
  border: 3px solid transparent;
  border-top: 3px solid #000;
  border-bottom: none;
}

.snap {
  padding: 0 3px 0 7px;
}

.select {
  position: relative;
  display: flex;
  background-color: #fff;
  border: 1px solid #aaa;
}

.select select {
  appearance: none;
  width: 100%;
  height: 21px;
  padding-left: 5px;
}

.select svg {
  position: absolute;
  right: 3px;
  top: 6px;
  width: 10px;
  height: 10px;
  pointer-events: none;
}

.zoom-level {
  width: 84px;
  margin: 0 2px 0 3px;
}

.outline-width {
  width: 78px;
  margin-right: 2px;
}

.pair {
  display: grid;
  grid-template-columns: 12px 86px;
  grid-auto-rows: 16px;
  align-items: center;
  gap: 0 1px;
  margin: 0 2px 0 4px;
}

.pair label {
  color: #333;
}

.pair svg {
  width: 14px;
  height: 14px;
}

.pair input,
.angle {
  width: 100%;
  height: 17px;
  padding: 0 3px;
  background-color: #fff;
  border: 1px solid #aaa;
}

.size {
  grid-template-columns: 15px 86px;
  margin: 0 5px 0 4px;
}

.scale {
  grid-template-columns: 41px 12px;
  gap: 0 3px;
  margin: 0;
}

.lock {
  width: 25px;
}

.propbar .angle {
  width: 48px;
  height: 24px;
}

.rotate {
  padding: 0 4px 0 3px;
}

.rotate svg {
  width: 14px;
  height: 14px;
}

.degree {
  width: 21px;
  padding-right: 4px;
  text-align: center;
}

.pen {
  padding: 0 5px 0 4px;
}

.pen svg,
.outline svg {
  width: 14px;
  height: 16px;
}

.propbar .add {
  margin-left: 10px;
}

/* trim button with its mark and tooltip */
.trim {
  position: relative;
}

.mark {
  position: absolute;
  left: -11px;
  top: -5px;
  z-index: 3;
  width: 54px;
  height: 38px;
}

.tooltip {
  position: absolute;
  left: 30px;
  top: 36px;
  z-index: 2;
  width: 238px;
  padding: 2px 5px;
  font-size: 11px;
  color: #575757;
  background-color: #fff;
  border: 1px solid #767676;
  box-shadow: 3px 3px 2px #999;
}

.tooltip p,
.tooltip strong {
  display: block;
  line-height: 15px;
}

/* main area */
main {
  position: relative;
  display: flex;
  flex: 1;
  min-height: 0;
  border-bottom: 1px solid #d3d3d3;
}

.toolbox {
  width: 30px;
  border-right: 1px solid #d3d3d3;
}

.toolbox .tool {
  position: relative;
}

.more::after {
  content: "";
  position: absolute;
  right: 3px;
  bottom: 3px;
  border-left: 5px solid transparent;
  border-bottom: 5px solid #000;
}

.rule {
  display: block;
  height: 1px;
  margin: 4px 4px 3px;
  background-color: #d0d0d0;
}

.toolbox .add {
  margin: 11px 5px 0;
}

.document {
  position: relative;
  display: flex;
  flex-direction: column;
  flex: 1;
  min-width: 0;
}

.tabs {
  display: flex;
  height: 20px;
  background-color: #e9e9e9;
  border-bottom: 1px solid #2d9fd0;
}

.tab {
  justify-content: flex-start;
  width: 112px;
  padding: 0 4px 0 3px;
  background-color: #d8d8d8;
}

.tab.active {
  width: 76px;
  background-color: #cce2ff;
}

.tab-add {
  width: 20px;
  background-color: #dcdcdc;
}

.tab-add svg {
  width: 12px;
  height: 12px;
}

.ruler-row {
  display: flex;
  height: 19px;
}

.ruler-corner {
  width: 18px;
  height: 18px;
}

.ruler-top {
  flex: 1;
  height: 19px;
  min-width: 0;
  border-bottom: 1px solid #888;
}

.ruler-top text,
.ruler-left text {
  font-size: 10px;
  fill: #888;
}

.work {
  display: flex;
  flex: 1;
  min-height: 0;
}

.ruler-left {
  width: 18px;
  height: 100%;
}

.stage {
  display: flex;
  flex-direction: column;
  flex: 1;
  min-width: 0;
  border-left: 1px solid #888;
}

.view {
  display: flex;
  flex: 1;
  min-height: 0;
  background-color: #fff;
}

.canvas {
  flex: 1;
  height: 100%;
  min-width: 0;
}

.scroll-y {
  display: flex;
  flex-direction: column;
  width: 17px;
  border-right: 2px solid #f3f3f3;
}

.scroll-y button,
.scroll-x button {
  width: 17px;
  height: 17px;
  background-color: #f0f0f0;
}

.scroll-y button svg,
.scroll-x button svg {
  width: 10px;
  height: 10px;
}

.scroll-y button {
  width: 15px;
}

.track {
  flex: 1;
  background-color: #fff;
}

.thumb {
  display: block;
  background-color: #cdcdcd;
}

.scroll-y .thumb {
  height: 60%;
  margin-top: 95px;
}

.bottom {
  display: flex;
  height: 18px;
}

.pages {
  display: flex;
  flex: 0 0 640px;
  align-items: center;
  border-top: 1px solid #888;
  border-right: 1px solid #888;
}

.pages button svg {
  width: 17px;
  height: 14px;
}

.page-count {
  width: 60px;
  text-align: center;
}

.pages .page-tab {
  justify-content: space-between;
  width: 67px;
  height: 17px;
  margin-left: 1px;
  border-left: 1px solid #888;
}

.page-tab span {
  flex: 1;
  padding-left: 6px;
  background-color: #fff;
}

.pages .page-tab svg {
  width: 10px;
  height: 17px;
}

.grip {
  width: 1px;
  height: 12px;
  border-left: 1px dotted #999;
}

.grip.wide {
  width: 10px;
  height: 1px;
  margin: 4px 0 0;
  border-left: none;
  border-top: 2px dotted #bbb;
}

.pages .grip {
  margin: 0 5px 0 auto;
}

.scroll-x {
  display: flex;
  flex: 1;
}

.scroll-x .thumb {
  width: 96%;
  height: 15px;
  margin-top: 1px;
  margin-left: 10px;
}

.navigator {
  width: 17px;
  height: 18px;
}

.navigator svg {
  width: 14px;
  height: 14px;
}

.doc-palette {
  display: flex;
  align-items: center;
  height: 19px;
  border-top: 1px solid #d3d3d3;
}

.doc-palette .grip {
  margin: 0 3px 0 4px;
}

.doc-palette button svg {
  width: 14px;
  height: 14px;
}

.doc-palette .no-color {
  margin-left: 5px;
}

.no-color svg,
.doc-palette .no-color svg {
  width: 18px;
  height: 18px;
  border: 1px solid #555;
  background-color: #fff;
}

.doc-palette em {
  flex: 1;
  padding-left: 14px;
  text-align: center;
  color: #b0b0b0;
}

.doc-palette .next {
  margin-right: 4px;
}

.doc-palette button:last-child {
  margin-right: 9px;
}

/* small square floating over the ruler */
.drop-zone {
  position: absolute;
  right: 75px;
  top: 26px;
  width: 29px;
  height: 29px;
  border: 1px solid #aaa;
  background-color: #f3f3f3;
  box-shadow: inset 0 0 0 4px #ebebeb;
}

.docker {
  display: flex;
  flex-direction: column;
  align-items: center;
  width: 24px;
  background-color: #e9e9e9;
  border-left: 5px double #d3d3d3;
}

.docker-close {
  width: 19px;
  height: 20px;
}

.docker-close svg {
  width: 10px;
  height: 10px;
}

.docker-tab {
  flex-direction: column;
  justify-content: flex-start;
  gap: 5px;
  width: 19px;
  height: 90px;
  padding-top: 4px;
  background-color: #b3b3b3;
}

.docker-tab svg {
  width: 16px;
  height: 14px;
}

.docker-tab span {
  writing-mode: vertical-rl;
}

.docker .add {
  margin-top: 16px;
}

.palette {
  display: flex;
  flex-direction: column;
  width: 19px;
  border-left: 1px solid #d3d3d3;
}

.palette-head,
.palette-foot {
  display: flex;
  flex-direction: column;
  align-items: center;
}

.palette-head {
  height: 54px;
  gap: 1px;
}

.palette-foot {
  height: 40px;
  gap: 4px;
}

.palette-head svg,
.palette-foot svg {
  width: 14px;
  height: 15px;
}

.swatches {
  flex: 1;
  min-height: 0;
  overflow: hidden;
  background-color: #58595b;
  padding: 1px 1px 0;
}

.swatches button {
  width: 16px;
  height: 16px;
  margin-bottom: 1px;
}

.swatches .none {
  background-color: #fff;
}

.arrow {
  position: absolute;
  right: 18px;
  top: 65px;
  width: 90px;
  height: 36px;
}

/* status bar */
.status {
  display: grid;
  grid-template-columns: 626px 1fr 232px 222px;
  align-items: center;
  height: 34px;
}

.profiles,
.fill,
.outline {
  display: flex;
  align-items: center;
}

.profiles {
  gap: 8px;
  padding-left: 5px;
  font-size: 11px;
}

.profiles span {
  white-space: nowrap;
}

.profiles svg {
  width: 15px;
  height: 15px;
  border: 1px solid #000;
}

.fill svg {
  width: 16px;
  height: 16px;
}

.fill {
  gap: 4px;
}

.fill > svg + svg {
  margin-left: 8px;
}

.outline {
  height: 22px;
  gap: 5px;
  padding-left: 6px;
  border-left: 1px solid #d0d0d0;
}

.black {
  width: 18px;
  height: 18px;
  background-color: #231f20;
  border: 1px solid #888;
}

/* taskbar */
.taskbar {
  position: relative;
  display: flex;
  gap: 4px;
  height: 40px;
  color: #fff;
}

.wallpaper {
  position: absolute;
  width: 100%;
  height: 100%;
  z-index: -1;
}

.start {
  width: 48px;
}

.start svg {
  width: 26px;
  height: 26px;
}

.app {
  width: 58px;
  height: 39px;
}

.app svg {
  width: 36px;
  height: 34px;
}

.app.open {
  background-color: #576d78;
  border: 1px solid #8295a0;
}

.app.current {
  background-color: #7c8e98;
  border-color: #e8eef0;
}

.tray {
  display: flex;
  align-items: center;
  gap: 8px;
  margin-left: auto;
  padding-right: 12px;
}

.tray svg {
  width: 16px;
  height: 16px;
}

.clock {
  display: flex;
  flex-direction: column;
  align-items: center;
  width: 62px;
  margin-left: 2px;
}
```
